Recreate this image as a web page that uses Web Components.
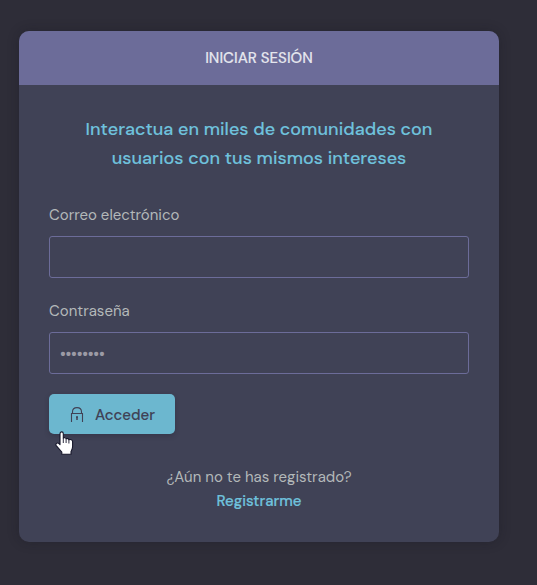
<!DOCTYPE html>
<html lang="es">
<head>
<meta charset="utf-8">
<title>Iniciar sesión</title>
<style>
html,body{margin:0;height:100%}
body{background:#2e2d38;font-family:"DM Sans",Inter,"Open Sans",sans-serif;font-optical-sizing:none;overflow:hidden;color:#b3b8b9}
</style>
</head>
<body>
<login-page></login-page>
<script>
function define(name, html){
  const t=document.createElement('template');
  t.innerHTML=html;
  customElements.define(name,class extends HTMLElement{
    constructor(){super();this.attachShadow({mode:'open'}).append(t.content.cloneNode(true));}
  });
}

define('lock-icon',`<style>:host{display:block;width:14px;height:17px}svg{display:block}</style>
<svg width="14" height="17" viewBox="0 0 14 17" fill="none" stroke="#404256">
<path d="M1.5 16V7.5H12.5V16M2.5 7V5.8C2.5 3 4.3 1.6 7 1.6S11.5 3 11.5 5.8V7" stroke-width="1.1"/>
<path d="M6 11H8M7 10.5V14" stroke-width="1.5"/></svg>`);

define('hand-cursor',`<style>:host{display:block;width:19px;height:25px}svg{display:block}</style>
<svg width="19" height="25" viewBox="0 0 19 25">
<path d="M5 2.7C5 .3 8.3.3 8.3 2.7V7C9.3 6.3 10.8 6.6 11.1 7.7C12.1 7.2 13.6 7.6 13.9 8.8C15.4 8 17.6 8.7 17.6 10.8V15.5C17.6 18 16.5 19.2 16 20.5V23.3H6.8V21L1.2 14.6C.2 12.8 2.3 11.3 3.7 12.4L5 13.6Z" fill="#fff" stroke="#17172b" stroke-width="1.1" stroke-linejoin="round"/>
<path d="M8.3 7V12M11.1 7.8V12M13.9 9V12.5" stroke="#17172b" stroke-width=".9" fill="none"/></svg>`);

define('panel-card',`<style>
:host{display:block;width:480px;height:511px;border-radius:10px;overflow:hidden;background:#404256;box-shadow:0 0 12px rgba(20,20,30,.3)}
header{height:54px;display:flex;align-items:center;justify-content:center;background:#6c6c99;color:#e4e5ed;font-size:15px;font-weight:500;-webkit-text-stroke:.1px;white-space:nowrap}
main{padding:30px 30px 0;display:flex;flex-direction:column}
</style><header><slot name="title"></slot></header><main><slot></slot></main>`);

define('tag-line',`<style>:host{display:block;height:87px;color:#6fc1dc;font-size:18px;font-weight:500;-webkit-text-stroke:.1px;letter-spacing:.03px;line-height:29px;text-align:center;white-space:nowrap}</style><slot></slot>`);

customElements.define('form-field',class extends HTMLElement{
  constructor(){
    super();
    this.attachShadow({mode:'open'}).innerHTML=`<style>
:host{display:block;height:96px}
label{display:block;height:34px;line-height:27px;font-size:15px;white-space:nowrap}
input{display:block;box-sizing:border-box;width:420px;height:42px;padding:2px 10px 0;border:1px solid #6c6c99;border-radius:3px;background:transparent;outline:0;font:700 15px "DM Sans",Inter,sans-serif;font-optical-sizing:none;letter-spacing:-.25px}
input::placeholder{color:#9c9aa5;opacity:1}
</style><label for="field"></label><input id="field">`;
  }
  connectedCallback(){
    this.shadowRoot.querySelector('label').textContent=this.getAttribute('label');
    const input=this.shadowRoot.querySelector('input');
    input.type=this.getAttribute('type');
    input.placeholder=this.getAttribute('hint')||'';
  }
});

define('access-button',`<style>
:host{display:block;width:126px;height:40px}
button{box-sizing:border-box;width:126px;height:40px;border:0;border-radius:5px;padding:1px 20px 0 21px;display:flex;align-items:center;gap:11px;background:#6cb7cf;color:#404256;font:500 15px "DM Sans",Inter,sans-serif;font-optical-sizing:none;white-space:nowrap;box-shadow:0 2px 5px rgba(30,30,45,.3);-webkit-text-stroke:.1px}
</style><button type="button"><lock-icon></lock-icon><span><slot></slot></span></button>`);

define('register-prompt',`<style>
:host{display:block;margin-top:31px;text-align:center;font-size:15px;line-height:24px;white-space:nowrap}
p{margin:0}a{color:#6fc1dc;font-weight:500;-webkit-text-stroke:.2px;text-decoration:none}
</style><p><slot name="question"></slot></p><p><a href="#"><slot name="action"></slot></a></p>`);

define('login-page',`<style>
:host{display:block;position:relative;box-sizing:border-box;width:537px;height:585px;padding:31px 0 0 19px}
hand-cursor{position:absolute;left:55px;top:430.5px}
</style>
<panel-card><span slot="title">INICIAR SESIÓN</span>
<tag-line>Interactua en miles de comunidades con<br>usuarios con tus mismos intereses</tag-line>
<form-field label="Correo electrónico" type="email"></form-field>
<form-field label="Contraseña" type="password" hint="••••••••"></form-field>
<access-button>Acceder</access-button>
<register-prompt><span slot="question">¿Aún no te has registrado?</span><span slot="action">Registrarme</span></register-prompt>
</panel-card>
<hand-cursor></hand-cursor>`);
</script>
</body>
</html>
